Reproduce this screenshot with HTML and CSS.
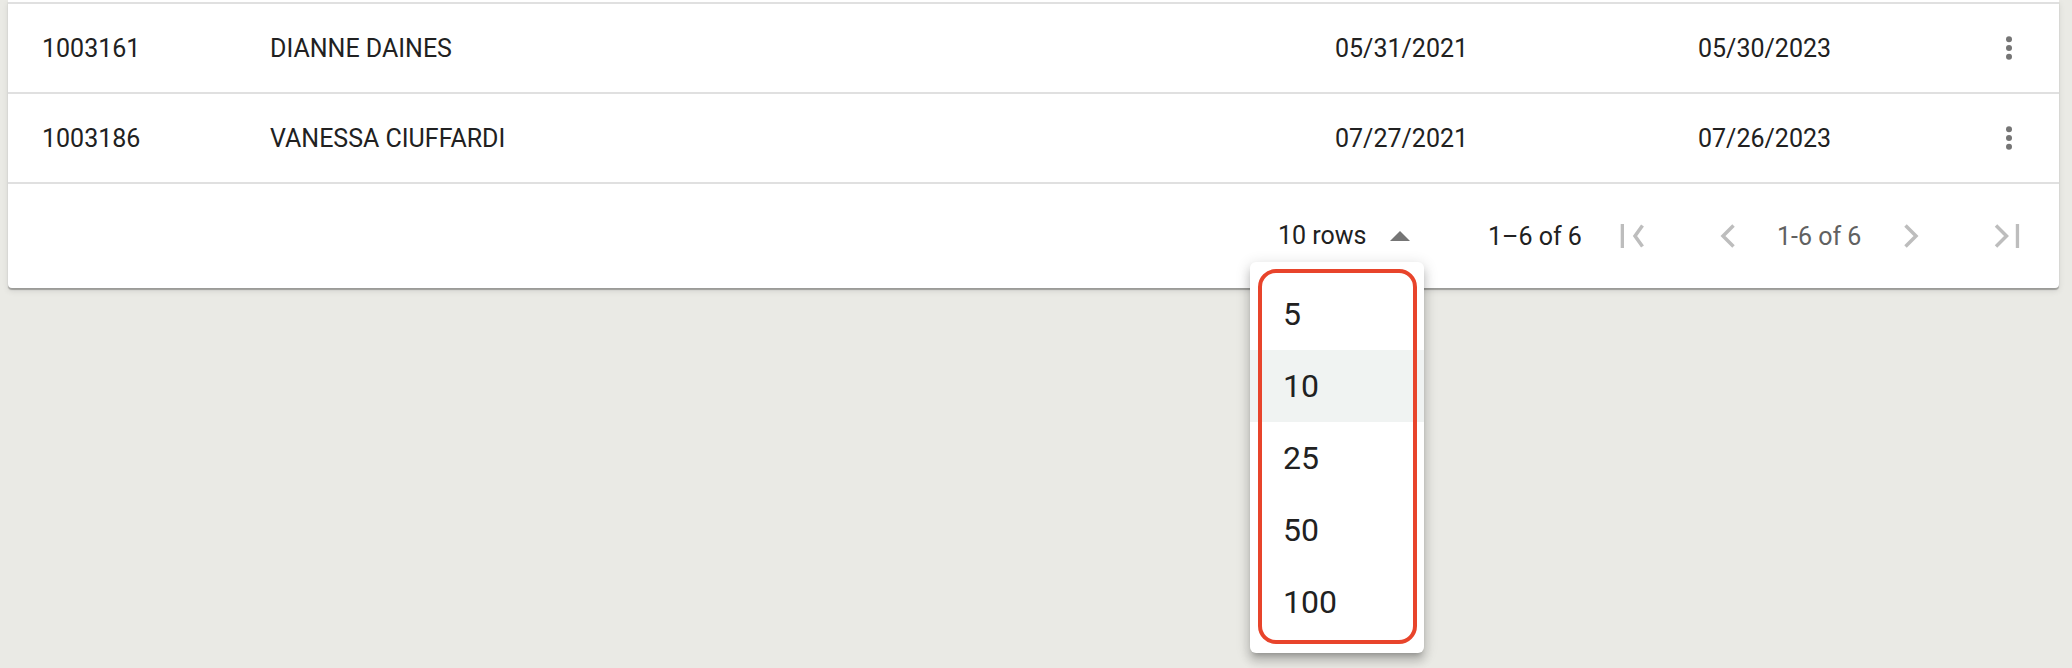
FILE: index.html
```html
<!DOCTYPE html>
<html lang="en">
<head>
<meta charset="utf-8">
<title>Members</title>
<link rel="stylesheet" href="styles.css">
</head>
<body>
<div class="card">
  <div class="row-cut"></div>
  <div class="row">
    <span class="cell">1003161</span>
    <span class="cell">DIANNE DAINES</span>
    <span class="cell">05/31/2021</span>
    <span class="cell">05/30/2023</span>
    <span class="kebab"><svg width="36" height="36" viewBox="0 0 36 36"><circle cx="18" cy="9.3" r="3"/><circle cx="18" cy="18" r="3"/><circle cx="18" cy="26.7" r="3"/></svg></span>
  </div>
  <div class="row">
    <span class="cell">1003186</span>
    <span class="cell">VANESSA CIUFFARDI</span>
    <span class="cell">07/27/2021</span>
    <span class="cell">07/26/2023</span>
    <span class="kebab"><svg width="36" height="36" viewBox="0 0 36 36"><circle cx="18" cy="9.3" r="3"/><circle cx="18" cy="18" r="3"/><circle cx="18" cy="26.7" r="3"/></svg></span>
  </div>
  <div class="footer">
    <div class="rows-select">
      <span class="rows-label">10 rows</span>
      <svg class="caret" width="20" height="10" viewBox="0 0 20 10"><polygon points="0,10 10,0 20,10"/></svg>
      <div class="menu">
        <div class="menu-item">5</div>
        <div class="menu-item active">10</div>
        <div class="menu-item">25</div>
        <div class="menu-item">50</div>
        <div class="menu-item">100</div>
        <div class="highlight-ring"></div>
      </div>
    </div>
    <span class="range">1–6 of 6</span>
    <span class="nav nav-first"><svg width="48" height="48" viewBox="0 0 48 48"><rect x="12.7" y="12" width="3.3" height="24"/><polyline points="34.5,13.5 27,24 34.5,34.5"/></svg></span>
    <span class="nav nav-prev"><svg width="48" height="48" viewBox="0 0 48 48"><polyline points="29.5,13.5 19,24 29.5,34.5"/></svg></span>
    <span class="page">1-6 of 6</span>
    <span class="nav nav-next"><svg width="48" height="48" viewBox="0 0 48 48"><polyline points="18.5,13.5 29,24 18.5,34.5"/></svg></span>
    <span class="nav nav-last"><svg width="48" height="48" viewBox="0 0 48 48"><polyline points="13,13.5 23.5,24 13,34.5"/><rect x="32.8" y="12" width="3.3" height="24"/></svg></span>
  </div>
</div>
</body>
</html>
```

FILE: styles.css
```css
html, body {
  margin: 0;
  padding: 0;
}
body {
  background: #eaeae5;
  font-family: Roboto, "Noto Sans", sans-serif;
  color: #212121;
  padding: 0 13px 0 8px;
  height: 668px;
  overflow: hidden;
}
.card {
  background: #fff;
  border-radius: 0 0 4px 4px;
  box-shadow: 0 2px 1px rgba(0,0,0,0.28), 0 3px 6px rgba(0,0,0,0.10);
}
.row-cut {
  height: 2px;
  border-bottom: 2px solid #e0e0e0;
}
.row {
  display: grid;
  grid-template-columns: 228px 1065px 363px 1fr 36px;
  align-items: center;
  height: 88px;
  padding: 0 32.5px 0 34px;
  border-bottom: 2px solid #e0e0e0;
  font-size: 25px;
}
.kebab {
  display: flex;
  width: 36px;
  height: 36px;
  fill: #757575;
}
.footer {
  display: flex;
  align-items: center;
  justify-content: flex-end;
  height: 104px;
  padding-right: 28.5px;
  font-size: 25px;
}
.rows-select {
  position: relative;
  display: flex;
  align-items: center;
  height: 28px;
  line-height: 28px;
}
.rows-label {
  width: 87px;
  white-space: nowrap;
}
.caret {
  fill: #757575;
  margin-left: 25px;
}
.range {
  margin-left: 78px;
  width: 94px;
  white-space: nowrap;
}
.nav {
  display: flex;
  width: 48px;
  height: 48px;
}
.nav svg {
  fill: #bdbdbd;
  stroke: #bdbdbd;
}
.nav rect {
  stroke: none;
}
.nav polyline {
  fill: none;
  stroke-width: 3.5;
}
.nav-first { margin-left: 26px; }
.nav-prev { margin-left: 48px; }
.page {
  margin-left: 25px;
  width: 85px;
  white-space: nowrap;
  color: #616161;
}
.nav-next { margin-left: 25px; }
.nav-last { margin-left: 47.5px; }

.menu {
  position: absolute;
  left: -28px;
  top: 40px;
  width: 174px;
  padding: 16px 0 15px;
  background: #fff;
  border-radius: 6px;
  box-shadow: 0 5px 5px -3px rgba(0,0,0,0.2), 0 8px 10px 1px rgba(0,0,0,0.14), 0 3px 14px 2px rgba(0,0,0,0.12);
  z-index: 5;
}
.menu-item {
  height: 72px;
  line-height: 72px;
  padding-left: 33px;
  font-size: 32px;
  color: #212121;
}
.menu-item.active {
  background: #f0f3f2;
}
.highlight-ring {
  position: absolute;
  left: 8px;
  top: 7px;
  width: 159px;
  height: 375px;
  box-sizing: border-box;
  border: 4px solid #e8442b;
  border-radius: 18px;
  pointer-events: none;
}
```
